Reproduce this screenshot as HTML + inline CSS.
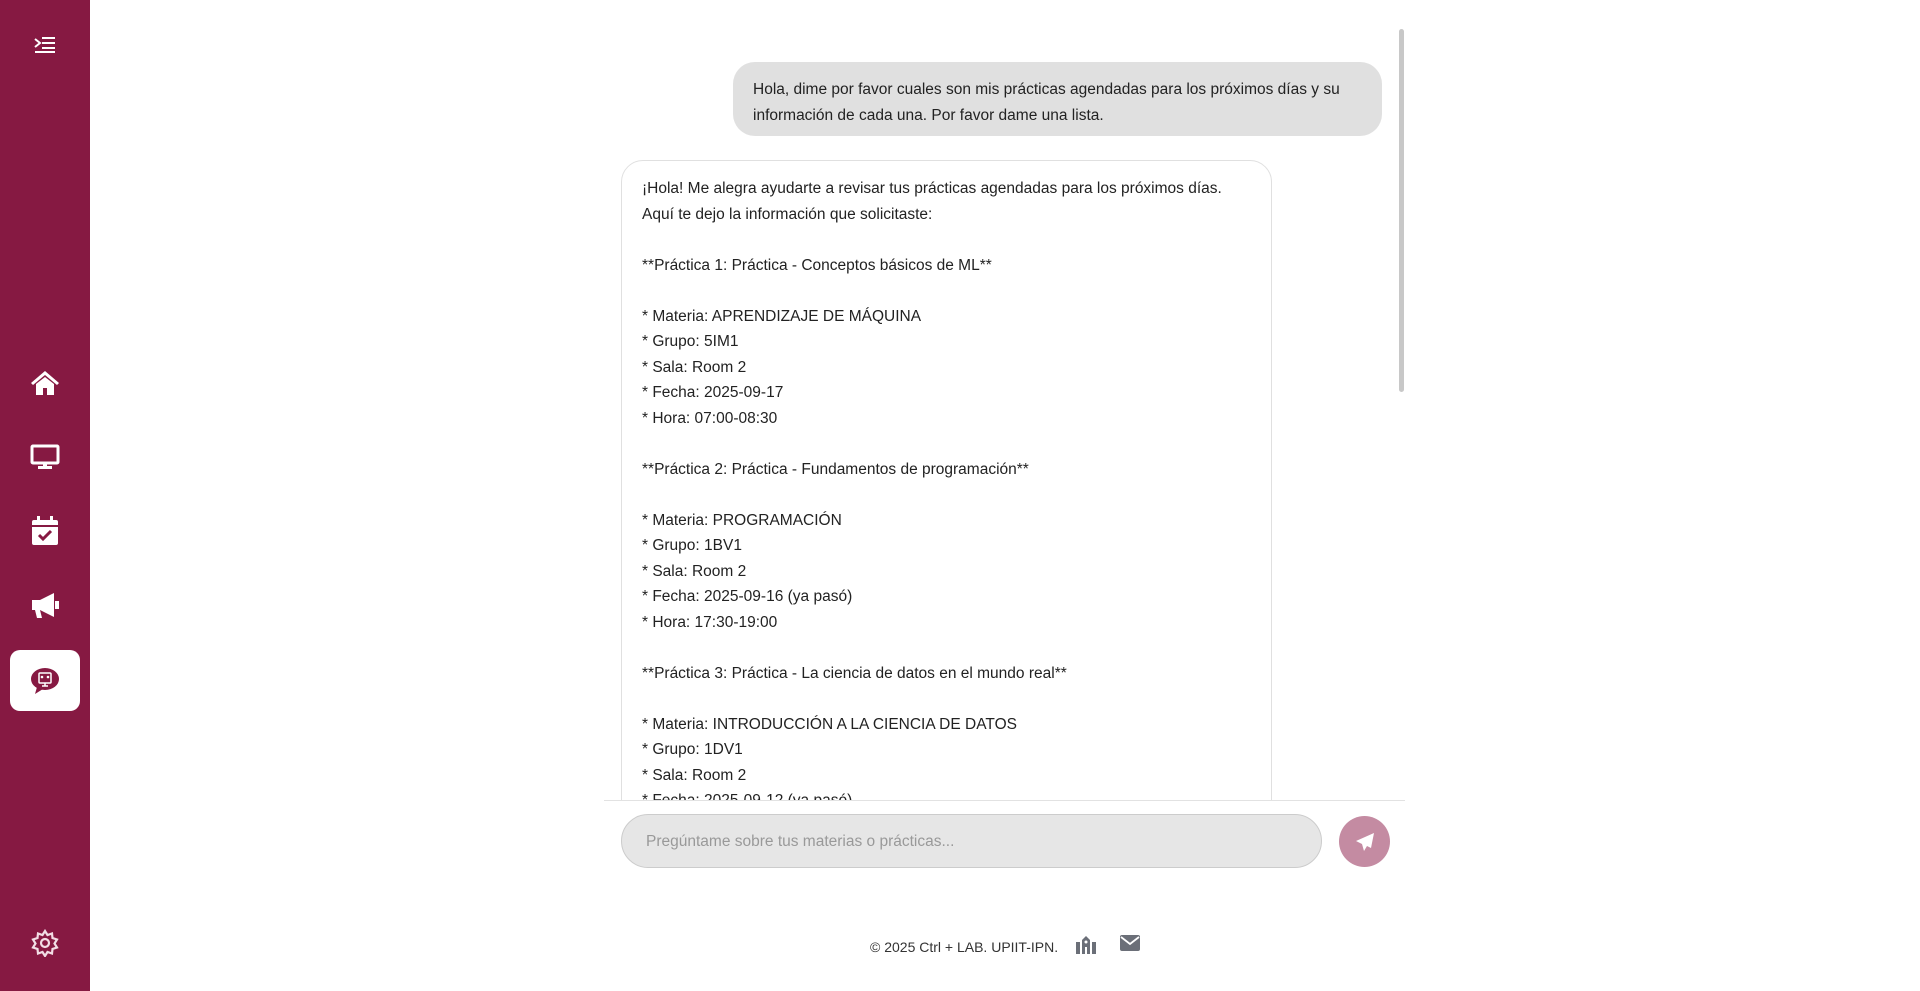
<!DOCTYPE html>
<html><head><meta charset="utf-8"><style>
*{box-sizing:border-box;margin:0;padding:0}
body{width:1920px;height:991px;overflow:hidden;background:#fff;font-family:"Liberation Sans",sans-serif;color:#222;position:relative}
.sb{position:absolute;left:0;top:0;width:90px;height:991px;background:#861942}
.ic{position:absolute;left:0;width:90px;display:flex;justify-content:center;align-items:center}
.act{position:absolute;left:10px;top:650px;width:70px;height:61px;background:#fff;border-radius:10px}
.msgs{position:absolute;left:604px;top:0;width:801px;height:801px;overflow:hidden;border-bottom:1px solid #e2e2e2}
.ub{position:absolute;left:129px;top:62px;width:649px;height:74px;background:#e0e0e0;border-radius:22px;padding:15px 20px;font-size:15.5px;line-height:25.5px}
.ab{position:absolute;left:17px;top:160px;width:651px;height:700px;border:1px solid #e0e0e0;border-radius:22px;padding:15px 20px;font-size:15.5px;line-height:25.5px;white-space:pre-line}
.sc{position:absolute;left:1399px;top:29px;width:5px;height:363px;background:#c8c8c8;border-radius:3px}
.inp{position:absolute;left:621px;top:814px;width:701px;height:54px;background:#e6e6e6;border:1px solid #ccc;border-radius:27px;padding:0 24px;line-height:54px;color:#999;font-size:15.5px}
.send{position:absolute;left:1339px;top:816px;width:51px;height:51px;border-radius:50%;background:#c48ba2;display:flex;align-items:center;justify-content:center}
.ft{position:absolute;left:870px;top:939px;font-size:14px;color:#333}
</style></head><body>
<div class="sb">
<div class="ic" style="top:35px;height:20px"><svg width="22" height="18" viewBox="0 0 22 18" fill="none" stroke="#fff" stroke-width="2"><path d="M1 3l5 4-5 4"/><path d="M8 2h13M8 7h13M8 12h13M1 16h20" /></svg></div>
<div class="ic" style="top:370px;height:26px"><svg width="30" height="26" viewBox="0 0 30 26" fill="#fff"><path d="M15 1L1 13l2 2 12-10 12 10 2-2z"/><path d="M6 14l9-7 9 7v11h-7v-7h-4v7H6z"/></svg></div>
<div class="ic" style="top:444px;height:26px"><svg width="30" height="26" viewBox="0 0 30 26"><rect x="2" y="2" width="26" height="17" rx="1" fill="none" stroke="#fff" stroke-width="3"/><rect x="13" y="19" width="4" height="4" fill="#fff"/><rect x="8" y="22" width="14" height="3" fill="#fff"/></svg></div>
<div class="ic" style="top:516px;height:30px"><svg width="28" height="30" viewBox="0 0 28 30"><rect x="1" y="4" width="26" height="25" rx="2" fill="#fff"/><rect x="6" y="0" width="3" height="7" fill="#fff"/><rect x="19" y="0" width="3" height="7" fill="#fff"/><rect x="1" y="9" width="26" height="2" fill="#861942"/><path d="M8 19l4 4 8-8" stroke="#861942" stroke-width="3" fill="none"/></svg></div>
<div class="ic" style="top:591px;height:28px"><svg width="30" height="28" viewBox="0 0 30 28" fill="#fff"><path d="M2 9h8l14-7v24l-14-7H2z"/><path d="M5 19h5l2 8H7z"/><rect x="25" y="10" width="4" height="8"/></svg></div>
<div class="act"></div>
<div class="ic" style="top:667px;height:28px"><svg width="30" height="28" viewBox="0 0 30 28"><ellipse cx="15" cy="12" rx="14" ry="11" fill="#861942"/><path d="M7 20l-2 7 8-5z" fill="#861942"/><rect x="9" y="6" width="12" height="10" rx="1" fill="none" stroke="#fff" stroke-width="1.5"/><circle cx="12" cy="10" r="1.3" fill="#fff"/><circle cx="18" cy="10" r="1.3" fill="#fff"/><path d="M15 16v3M12 19h6" stroke="#fff" stroke-width="1.5"/></svg></div>
<div class="ic" style="top:929px;height:28px"><svg width="28" height="28" viewBox="0 0 28 28" fill="none" stroke="#f2dde5" stroke-width="2.2"><path d="M14 2l2.5 4 4.5-1.5 0.5 4.5 4.5 1.5-2.5 4 2.5 4-4.5 1.5-0.5 4.5-4.5-1.5-2.5 4-2.5-4-4.5 1.5-0.5-4.5-4.5-1.5 2.5-4-2.5-4 4.5-1.5 0.5-4.5 4.5 1.5z"/><circle cx="14" cy="14" r="4"/></svg></div>
</div>
<div class="msgs">
<div class="ub">Hola, dime por favor cuales son mis prácticas agendadas para los próximos días y su información de cada una. Por favor dame una lista.</div>
<div class="ab">¡Hola! Me alegra ayudarte a revisar tus prácticas agendadas para los próximos días.
Aquí te dejo la información que solicitaste:

**Práctica 1: Práctica - Conceptos básicos de ML**

* Materia: APRENDIZAJE DE MÁQUINA
* Grupo: 5IM1
* Sala: Room 2
* Fecha: 2025-09-17
* Hora: 07:00-08:30

**Práctica 2: Práctica - Fundamentos de programación**

* Materia: PROGRAMACIÓN
* Grupo: 1BV1
* Sala: Room 2
* Fecha: 2025-09-16 (ya pasó)
* Hora: 17:30-19:00

**Práctica 3: Práctica - La ciencia de datos en el mundo real**

* Materia: INTRODUCCIÓN A LA CIENCIA DE DATOS
* Grupo: 1DV1
* Sala: Room 2
* Fecha: 2025-09-12 (ya pasó)
* Hora: 10:30-12:00</div>
</div>
<div class="sc"></div>
<div class="inp">Pregúntame sobre tus materias o prácticas...</div>
<div class="send"><svg width="20" height="20" viewBox="0 0 20 20" fill="#fff"><path d="M19 1L1 9l6 3 2 7 3-5 4 2z"/></svg></div>
<div class="ft">© 2025 Ctrl + LAB. UPIIT-IPN.
<svg style="position:absolute;left:205px;top:-3px" width="22" height="18" viewBox="0 0 22 18" fill="#6b6f78"><path d="M7 4l4-4 4 4v14H7z"/><rect x="1" y="6" width="4" height="12"/><rect x="17" y="6" width="4" height="12"/><circle cx="11" cy="6" r="1.5" fill="#fff"/><rect x="10" y="11" width="2" height="7" fill="#fff"/></svg>
<svg style="position:absolute;left:250px;top:-4px" width="20" height="16" viewBox="0 0 20 16"><rect width="20" height="16" rx="2" fill="#6b6f78"/><path d="M1 2l9 7 9-7" stroke="#fff" stroke-width="1.8" fill="none"/></svg>
</div>
</body></html>
